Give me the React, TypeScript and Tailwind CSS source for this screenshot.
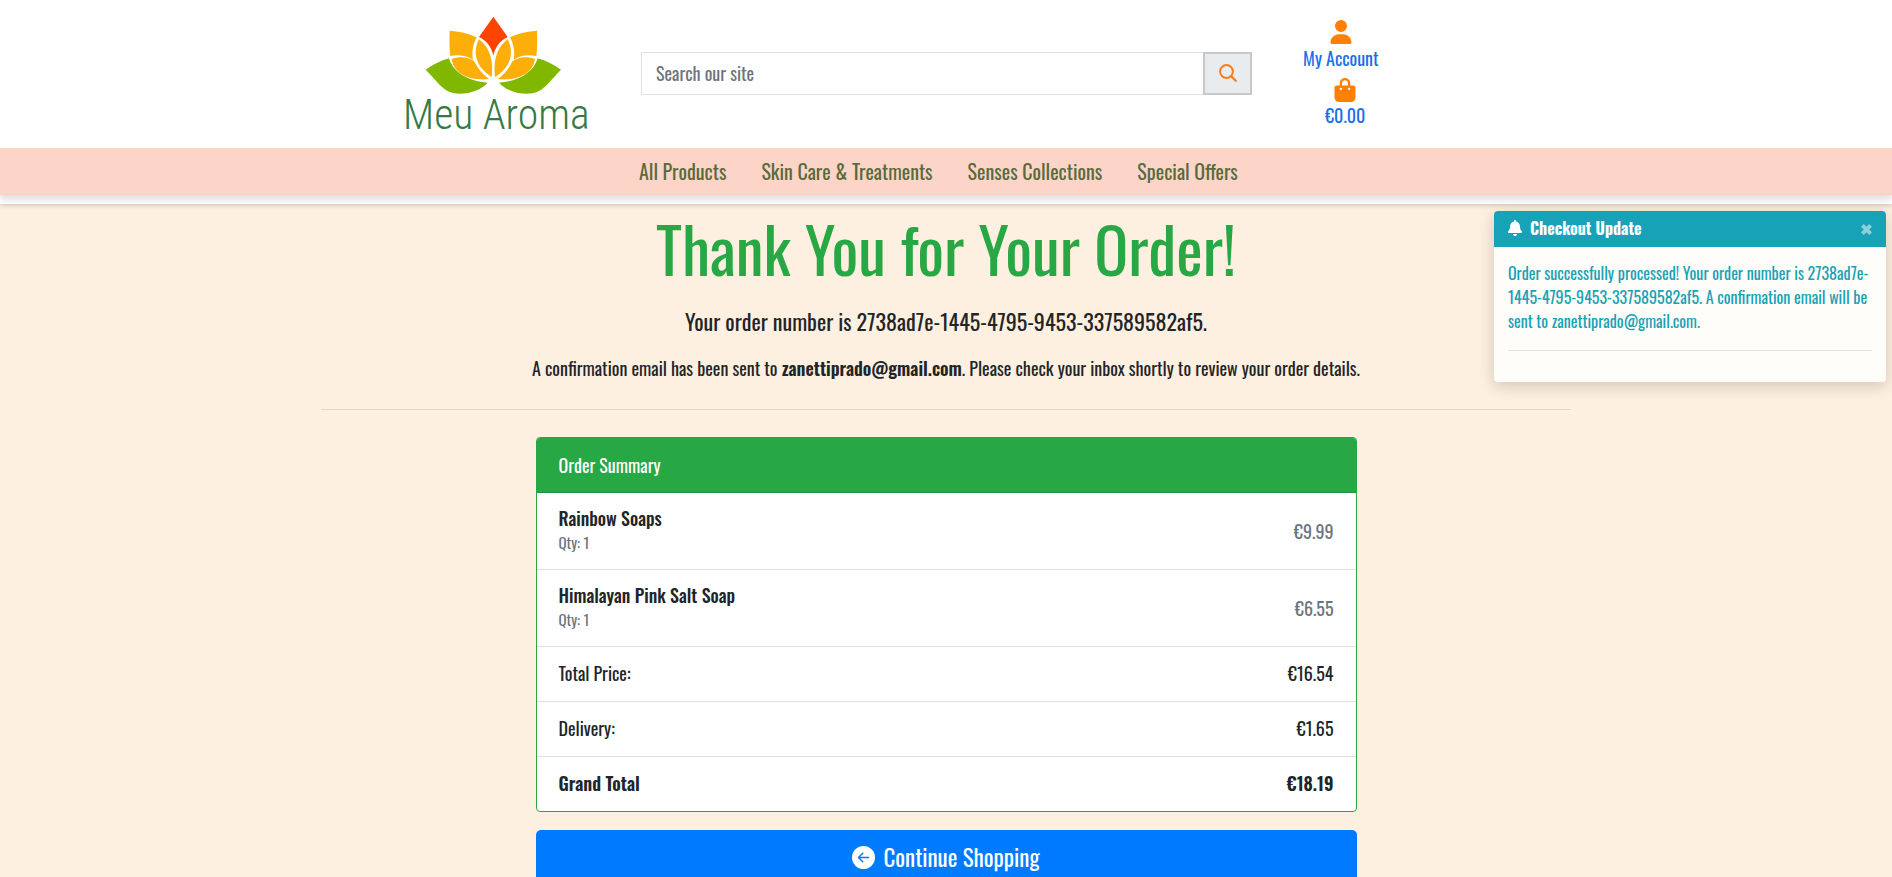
import { FaUser, FaBagShopping, FaBell } from "react-icons/fa6";
import { BsArrowLeftCircleFill } from "react-icons/bs";

const navItems = ["All Products", "Skin Care & Treatments", "Senses Collections", "Special Offers"];

const products = [
  { name: "Rainbow Soaps", qty: 1, price: "€9.99" },
  { name: "Himalayan Pink Salt Soap", qty: 1, price: "€6.55" },
];

const totals = [
  { label: "Total Price:", value: "€16.54" },
  { label: "Delivery:", value: "€1.65" },
];

function LotusSide() {
  return (
    <>
      <path
        fill="#80b800"
        d="M107 209C128 194 152 182 177 175C188 215 232 244 293 248C272 272 232 285 192 280C155 272 138 238 107 209Z"
      />
      <path
        fill="#fdae08"
        d="M179 92C207 94 236 100 260 112C248 135 245 158 249 179C230 167 206 163 181 168C178 145 178 118 179 92Z"
      />
      <path
        fill="#fdae08"
        d="M267 118C300 142 311 184 305 231C277 214 259 190 257 160C257 144 260 130 267 118Z"
      />
      <path
        fill="#fdae08"
        d="M185 177C212 168 235 172 253 184C262 205 277 222 297 237C245 243 192 226 185 177Z"
      />
    </>
  );
}

function Logo() {
  return (
    <svg viewBox="0 0 630 420" className="h-[140px] w-[210px]" role="img" aria-label="Meu Aroma">
      <LotusSide />
      <g transform="translate(620 0) scale(-1 1)">
        <LotusSide />
      </g>
      <path fill="#ff4300" d="M310 50L353 111C330 122 315 142 310 167C305 142 290 122 267 111Z" />
      <text
        x="319"
        y="386"
        textAnchor="middle"
        fill="#347a45"
        fontSize="125"
        fontWeight="300"
        fontFamily="'Roboto Condensed', sans-serif"
      >
        Meu Aroma
      </text>
    </svg>
  );
}

function SearchIcon() {
  return (
    <svg viewBox="0 0 18 18" className="size-[18px]" fill="none" stroke="currentColor" strokeLinecap="round">
      <circle cx="7.5" cy="7.5" r="6.4" strokeWidth="2" />
      <path d="M12.4 12.4L16.8 16.8" strokeWidth="2.2" />
    </svg>
  );
}

function CloseIcon() {
  return (
    <svg viewBox="0 0 11 11" className="size-[11px]" fill="none" stroke="currentColor" strokeWidth="3.8">
      <path d="M1.4 1.4L9.6 9.6M9.6 1.4L1.4 9.6" />
    </svg>
  );
}

function Header() {
  return (
    <header className="relative bg-white">
      <div className="mx-auto flex max-w-[1140px] items-center">
        <a href="#home" className="ml-[14px] block h-[148px] w-[210px]">
          <Logo />
        </a>
        <form className="mb-[2px] ml-[41px] flex w-[611px]" onSubmit={(e) => e.preventDefault()}>
          <input
            type="text"
            aria-label="Search our site"
            placeholder="Search our site"
            className="h-[43px] min-w-0 flex-1 border border-r-0 border-[#dee2e6] px-[14px] placeholder:text-[#6c757d] focus:outline-none"
          />
          <button
            type="submit"
            aria-label="Search"
            className="flex h-[43px] w-[49px] items-center justify-center border-2 border-[#c6c8ca] bg-[#e9ecef] text-[#f57f1e]"
          >
            <SearchIcon />
          </button>
        </form>
        <div className="ml-[51px] flex flex-col items-center leading-[27px] text-[#1a6fe8]">
          <a href="#account" className="flex flex-col items-center gap-[1px]">
            <FaUser size={24} className="text-[#ff7f00]" />
            My Account
          </a>
          <a href="#bag" className="mt-[6px] ml-[9px] flex flex-col items-center">
            <FaBagShopping size={24} className="text-[#ff7f00]" />
            €0.00
          </a>
        </div>
      </div>
      <nav className="bg-[#fdd5c8] shadow-[0_5px_6px_rgba(0,0,0,0.12)]">
        <ul className="mx-auto flex h-[47px] max-w-[1140px] items-center gap-[35px] pl-[263px] text-[20px] text-[#5a6b3b]">
          {navItems.map((item) => (
            <li key={item}>
              <a href="#products">{item}</a>
            </li>
          ))}
        </ul>
      </nav>
      <div className="h-[9px] shadow-[0_2px_4px_rgba(0,0,0,0.15)]" />
    </header>
  );
}

function CheckoutToast() {
  return (
    <aside
      role="status"
      className="absolute top-[211px] right-[6px] w-[392px] overflow-hidden rounded-[4px] bg-[#fffdf9] text-[16px] leading-[24px] shadow-[0_4px_16px_rgba(0,0,0,0.18)]"
    >
      <div className="flex h-[36px] items-center bg-[#17a2b8] pr-[14px] pb-[2px] pl-[13px] text-white">
        <FaBell size={16} />
        <strong className="ml-[7px] flex-1 font-bold">Checkout Update</strong>
        <button type="button" aria-label="Close" className="pt-[2px] opacity-50">
          <CloseIcon />
        </button>
      </div>
      <div className="px-[14px] pt-[14px] pb-[31px] text-[#17a2b8]">
        <p>
          Order successfully processed! Your order number is 2738ad7e-1445-4795-9453-337589582af5. A
          confirmation email will be sent to zanettiprado@gmail.com.
        </p>
        <hr className="mt-[17px] border-black/10" />
      </div>
    </aside>
  );
}

function OrderSummary() {
  return (
    <section className="overflow-hidden rounded-[4px] border border-[#28a745] bg-white">
      <h2 className="border-b border-[#20913c] bg-[#28a745] px-[22px] pt-[14px] pb-[13px] text-white">Order Summary</h2>
      <ul>
        {products.map((p) => (
          <li
            key={p.name}
            className="flex items-center justify-between border-b border-[#dfdfdf] px-[22px] pt-[14px] pb-[13px]"
          >
            <div>
              <h3 className="leading-[22px] font-medium">{p.name}</h3>
              <p className="text-[15px] leading-[27px] text-[#6c757d]">Qty: {p.qty}</p>
            </div>
            <span className="text-[#6c757d]">{p.price}</span>
          </li>
        ))}
        {totals.map((t) => (
          <li key={t.label} className="flex justify-between border-b border-[#dfdfdf] px-[22px] pt-[13px] pb-[14px]">
            <span>{t.label}</span>
            <span>{t.value}</span>
          </li>
        ))}
        <li className="flex justify-between px-[22px] pt-[13px] pb-[14px] font-semibold">
          <span>Grand Total</span>
          <span>€18.19</span>
        </li>
      </ul>
    </section>
  );
}

export default function App() {
  return (
    <div className="relative min-h-screen bg-[#fef0e0] font-['Oswald',sans-serif] text-[18px] leading-[27px] font-normal text-[#212529]">
      <Header />
      <CheckoutToast />
      <main className="mx-auto max-w-[1250px]">
        <div className="text-center">
          <h1 className="pt-[6px] text-[63px] leading-[76px] text-[#28a745]">Thank You for Your Order!</h1>
          <p className="mt-[18px] text-[22px] leading-[34px]">
            Your order number is 2738ad7e-1445-4795-9453-337589582af5.
          </p>
          <p className="mt-[17px]">
            A confirmation email has been sent to <strong className="font-semibold">zanettiprado@gmail.com</strong>.
            Please check your inbox shortly to review your order details.
          </p>
        </div>
        <hr className="mt-[27px] mb-[27px] border-black/10" />
        <div className="mx-auto max-w-[821px]">
          <OrderSummary />
          <a
            href="#products"
            className="mt-[18px] flex items-center justify-center gap-[8px] rounded-[5px] bg-[#007bff] py-[10px] text-[23px] leading-[34px] text-white"
          >
            <BsArrowLeftCircleFill size={23} />
            Continue Shopping
          </a>
        </div>
      </main>
    </div>
  );
}
